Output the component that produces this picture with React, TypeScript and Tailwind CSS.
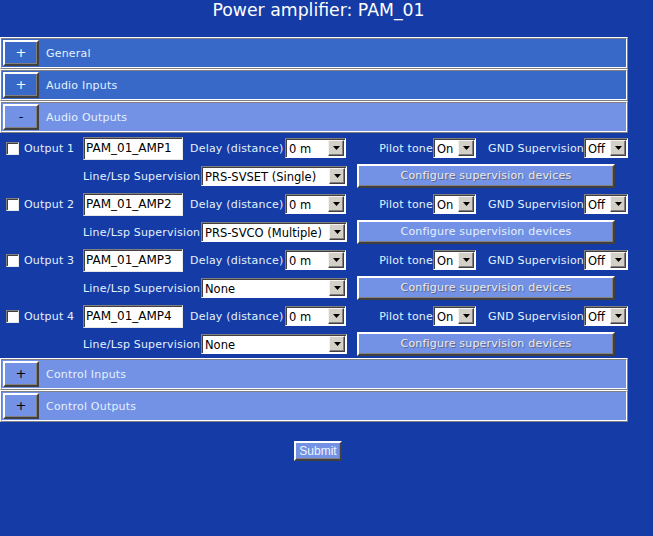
import React from 'react';

const font = "font-['DejaVu_Sans',Verdana,sans-serif]";

function Bar({ label, sign, light }: { label: string; sign: string; light?: boolean }) {
  return (
    <div className="h-[32px] w-[628px] border border-t-white border-l-white border-b-[#808080] border-r-[#808080]">
      <div
        className={`h-full w-full border border-t-[#808080] border-l-[#808080] border-b-white border-r-white p-px flex items-center ${
          light ? 'bg-[#7391e5]' : 'bg-[#3869c8]'
        }`}
      >
        <div
          className={`w-[36px] h-[26px] border-2 border-t-white border-l-white border-b-[#404040] border-r-[#404040] shadow-[inset_-1px_-1px_0_#808080] flex items-center justify-center text-[13px] ${
            light ? 'bg-[#7391e5] text-black' : 'bg-[#3869c8] text-white'
          }`}
        >
          {sign}
        </div>
        <span className="ml-[7px] pt-[2px] text-[11px] tracking-[0.2px] text-[#e3f1ff]">{label}</span>
      </div>
    </div>
  );
}

function Select({ value, w }: { value: string; w: string }) {
  return (
    <div
      className={`${w} h-[20px] bg-white border border-t-[#808080] border-l-[#808080] border-b-white border-r-white shadow-[inset_1px_1px_0_#404040] flex items-center pl-[3px] pr-px`}
    >
      <span className="flex-1 min-w-0 text-[11.5px] tracking-normal text-black leading-[16px] pt-px whitespace-nowrap">
        {value}
      </span>
      <div className="shrink-0 w-[16px] h-[16px] bg-[#d4d0c8] border border-t-[#f4f3ef] border-l-[#f4f3ef] border-b-[#404040] border-r-[#404040] shadow-[inset_-1px_-1px_0_#808080] flex items-center justify-center">
        <svg width="7" height="4" viewBox="0 0 7 4">
          <path d="M0 0h7L3.5 4z" fill="#000" />
        </svg>
      </div>
    </div>
  );
}

const outputs = [
  { n: 1, sup: 'PRS-SVSET (Single)', enabled: false },
  { n: 2, sup: 'PRS-SVCO (Multiple)', enabled: true },
  { n: 3, sup: 'None', enabled: false },
  { n: 4, sup: 'None', enabled: false },
];

function Output({ n, sup, enabled }: { n: number; sup: string; enabled: boolean }) {
  return (
    <div className="text-[11px] tracking-[0.2px] text-[#e3f1ff]">
      <div className="h-[28px] flex items-center pl-[6px]">
        <span className="w-[13px] h-[13px] bg-white border border-t-[#808080] border-l-[#808080] border-b-[#e8e8e8] border-r-[#e8e8e8] shadow-[inset_1px_1px_0_#404040]" />
        <span className="ml-[5px] w-[59px] pt-[2px]">Output {n}</span>
        <div className="w-[100px] h-[23px] bg-white border border-t-[#808080] border-l-[#808080] border-b-[#e8e8e8] border-r-[#e8e8e8] shadow-[inset_1px_1px_0_#404040] flex items-center pl-[2px] text-[12px] tracking-normal text-black">
          PAM_01_AMP{n}
        </div>
        <span className="ml-[7px] w-[95px] pt-[2px] whitespace-nowrap">Delay (distance)</span>
        <Select value="0 m" w="w-[61px]" />
        <span className="w-[87px] pt-[2px] text-right whitespace-nowrap">Pilot tone</span>
        <Select value="On" w="w-[43px]" />
        <span className="w-[108px] pt-[2px] text-right whitespace-nowrap">GND Supervision</span>
        <Select value="Off" w="w-[44px]" />
      </div>
      <div className="h-[28px] flex items-center pl-[83px]">
        <span className="w-[118px] pt-[2px] whitespace-nowrap">Line/Lsp Supervision</span>
        <Select value={sup} w="w-[146px]" />
        <div className="ml-[10px] w-[258px] h-[24px] bg-[#7391e5] border-2 border-t-white border-l-white border-b-[#404040] border-r-[#404040] shadow-[inset_-1px_-1px_0_#808080] flex items-center justify-center">
          {enabled ? (
            <span className="text-[#e3f1ff]">Configure supervision devices</span>
          ) : (
            <span className="text-[#ececec] [text-shadow:1px_1px_0_#5c6488]">Configure supervision devices</span>
          )}
        </div>
      </div>
    </div>
  );
}

export default function App() {
  return (
    <div className={`${font} w-[653px] h-[536px] bg-[#153ca6] overflow-hidden`}>
      <div className="w-[637px] h-[37px] text-center text-white text-[17.3px] leading-[20px]">Power amplifier: PAM_01</div>
      <Bar label="General" sign="+" />
      <Bar label="Audio Inputs" sign="+" />
      <Bar label="Audio Outputs" sign="-" light />
      <div className="pt-px">
        {outputs.map((o) => (
          <Output key={o.n} {...o} />
        ))}
      </div>
      <Bar label="Control Inputs" sign="+" light />
      <Bar label="Control Outputs" sign="+" light />
      <div className="w-[636px] flex justify-center mt-[19px]">
        <div className="w-[48px] h-[20px] bg-[#7391e5] border-2 border-t-white border-l-white border-b-[#404040] border-r-[#404040] shadow-[inset_-1px_-1px_0_#808080] flex items-center justify-center text-[12px] text-[#eef4ff] font-['Liberation_Sans',Arial,sans-serif]">
          Submit
        </div>
      </div>
    </div>
  );
}
